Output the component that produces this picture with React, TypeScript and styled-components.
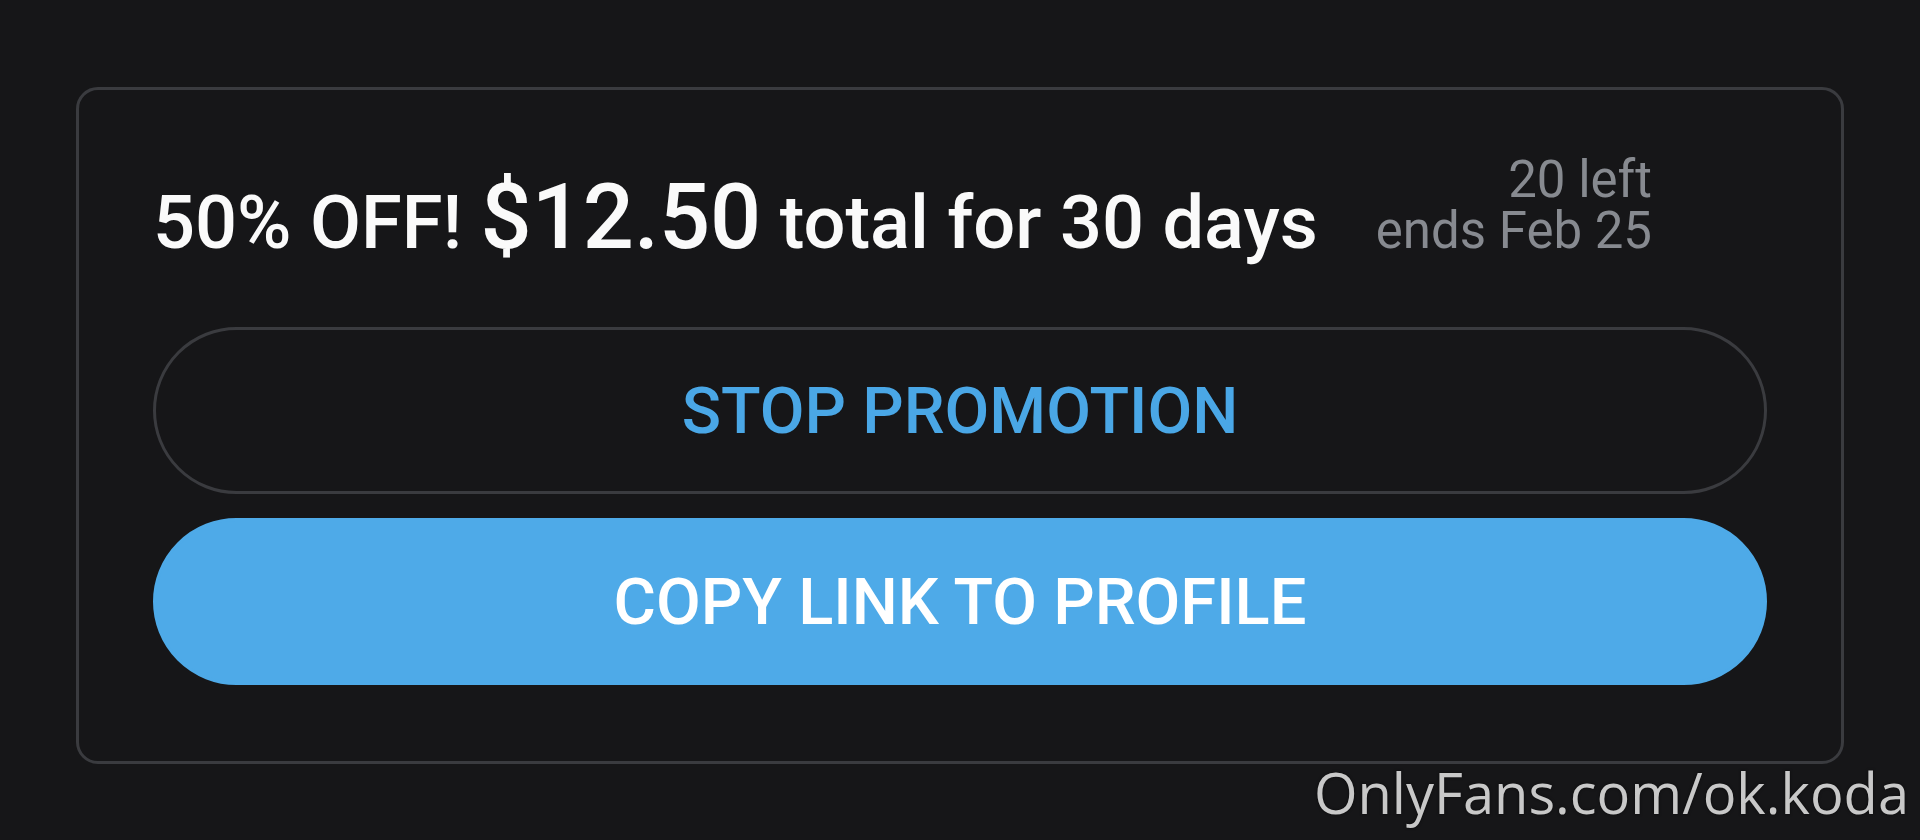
import React from "react";
import styled, { createGlobalStyle } from "styled-components";

const Global = createGlobalStyle`
  html, body {
    margin: 0;
    padding: 0;
    background: #161618;
  }
  body {
    width: 1920px;
    height: 840px;
    overflow: hidden;
    font-family: Roboto, "Liberation Sans", sans-serif;
  }
`;

const Page = styled.div`
  position: relative;
  width: 1920px;
  height: 840px;
  box-sizing: border-box;
  padding: 87px 0 0 76px;
  background: #161618;
`;

const Card = styled.section`
  width: 1768px;
  box-sizing: border-box;
  border: 3px solid #3a3b3f;
  border-radius: 22px;
  padding: 64px 74px 76px 74px;
  display: flex;
  flex-direction: column;
`;

const Header = styled.div`
  display: flex;
  align-items: last baseline;
  gap: 58px;
  margin-bottom: 60px;
`;

const Headline = styled.div`
  color: #fafafa;
  font-size: 74px;
  font-weight: 500;
  line-height: 88px;
  white-space: nowrap;
`;

const Price = styled.span`
  font-size: 90px;
  line-height: 88px;
`;

const Meta = styled.div`
  color: #878a90;
  font-size: 51px;
  line-height: 51px;
  text-align: right;
  white-space: nowrap;
`;

const Buttons = styled.div`
  display: flex;
  flex-direction: column;
  gap: 24px;
`;

const Button = styled.button<{ $primary?: boolean }>`
  height: 167px;
  width: 100%;
  box-sizing: border-box;
  border-radius: 84px;
  font-family: Roboto, "Liberation Sans", sans-serif;
  font-size: 65px;
  font-weight: 500;
  cursor: pointer;
  border: 3px solid ${(p) => (p.$primary ? "#4eaae8" : "#3a3b3f")};
  background: ${(p) => (p.$primary ? "#4eaae8" : "transparent")};
  color: ${(p) => (p.$primary ? "#ffffff" : "#4aa7e6")};
`;

const Watermark = styled.div`
  position: absolute;
  right: 11px;
  top: 760px;
  font-family: "Open Sans", "Noto Sans", sans-serif;
  font-size: 56px;
  line-height: 64px;
  color: #c8c8c8;
  text-shadow: 0 0 3px rgba(0, 0, 0, 0.6);
  white-space: nowrap;
`;

export default function App() {
  return (
    <Page>
      <Global />
      <Card>
        <Header>
          <Headline>
            50% OFF! <Price>$12.50</Price> total for 30 days
          </Headline>
          <Meta>
            20 left
            <br />
            ends Feb 25
          </Meta>
        </Header>
        <Buttons>
          <Button>STOP PROMOTION</Button>
          <Button $primary>COPY LINK TO PROFILE</Button>
        </Buttons>
      </Card>
      <Watermark>OnlyFans.com/ok.koda</Watermark>
    </Page>
  );
}
